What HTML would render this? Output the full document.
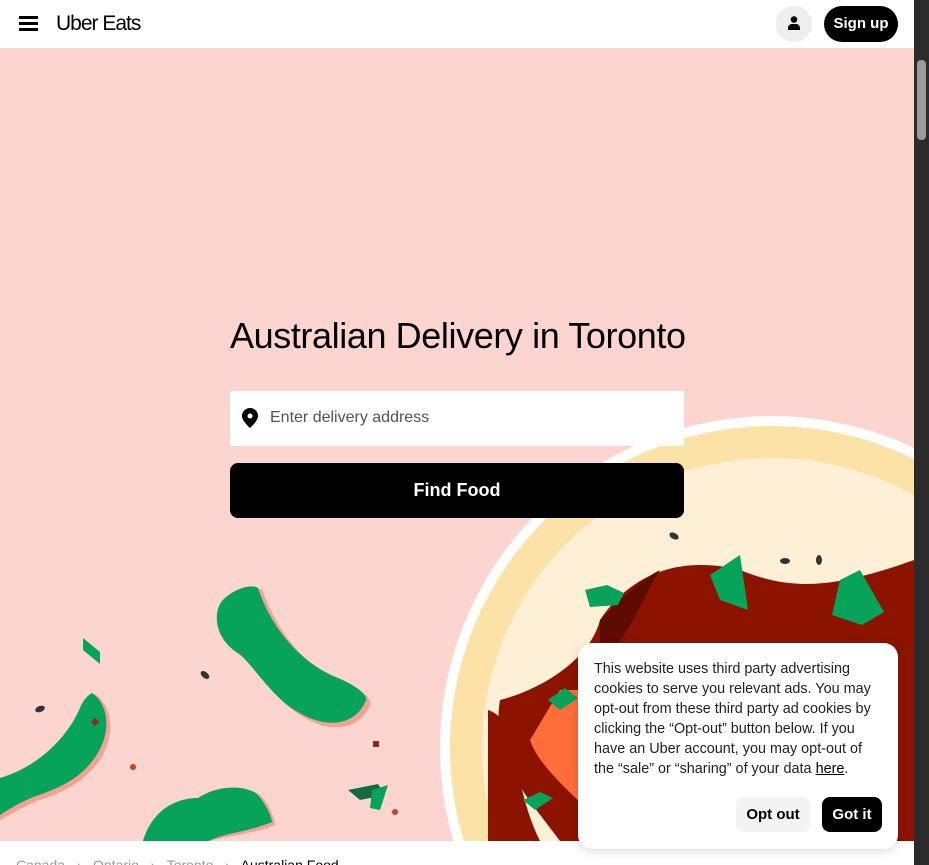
<!DOCTYPE html>
<html><head><meta charset="utf-8"><style>
*{margin:0;padding:0;box-sizing:border-box}
html,body{width:929px;height:865px;overflow:hidden}
body{background:#fff;font-family:"Liberation Sans",sans-serif;position:relative}
.hdr{position:absolute;left:0;top:0;width:914px;height:48px;background:#fff}
.hero{position:absolute;left:0;top:48px;width:914px;height:793px;background:#fdd5d0;overflow:hidden}
.sb{position:absolute;left:914px;top:0;width:15px;height:865px;background:#2b2b2b}
h1{position:absolute;left:230px;top:315px;font-size:36px;font-weight:400;color:#000;letter-spacing:-0.4px;white-space:nowrap}
.inp{position:absolute;left:230px;top:391px;width:454px;height:55px;background:#fff;font-size:16px;color:#545454}
.btn{position:absolute;left:230px;top:463px;width:454px;height:55px;background:#000;border-radius:8px;color:#fff;font-size:18px;font-weight:bold;text-align:center;line-height:55px}
.ck{position:absolute;left:578px;top:643px;width:320px;height:206px;background:#fff;border-radius:14px;box-shadow:0 2px 10px rgba(0,0,0,.15)}
.ck p{position:absolute;left:16px;top:16px;width:288px;font-size:14.4px;line-height:20px;color:#222}
.b{position:absolute;top:154px;height:35px;border-radius:8px;font-size:15px;font-weight:bold;text-align:center;line-height:35px}
.bc{position:absolute;top:857px;left:16px;font-size:14px;color:#999;white-space:nowrap;line-height:16px}
</style></head><body>
<div class="hdr">
<div style="position:absolute;left:19px;top:16px;width:19px;height:3px;background:#000"></div>
<div style="position:absolute;left:19px;top:22px;width:19px;height:3px;background:#000"></div>
<div style="position:absolute;left:19px;top:28px;width:19px;height:3px;background:#000"></div>
<div style="position:absolute;left:56px;top:12px;font-size:21px;letter-spacing:-1px;color:#000">Uber Eats</div>
<div style="position:absolute;left:776px;top:6px;width:36px;height:36px;border-radius:18px;background:#eee"></div>
<svg style="position:absolute;left:786px;top:15px" width="16" height="16" viewBox="0 0 16 16"><circle cx="8" cy="4.5" r="3.3" fill="#000"/><path d="M2 15v-2a4 4 0 0 1 4-4h4a4 4 0 0 1 4 4v2z" fill="#000"/></svg>
<div style="position:absolute;left:824px;top:6px;width:74px;height:36px;border-radius:18px;background:#000;color:#fff;font-weight:bold;font-size:15px;text-align:center;line-height:36px">Sign up</div>
</div>
<div class="hero">
<svg width="914" height="793" style="position:absolute;left:0;top:0">
<g transform="translate(0,-48)">
<circle cx="772" cy="748" r="332" fill="#fff"/>
<circle cx="772" cy="748" r="322" fill="#fde2a8"/>
<circle cx="772" cy="748" r="290" fill="#fef0d6"/>
<path d="M600 620 C640 560 700 560 740 570 C790 590 830 590 914 560 L914 841 L560 841 C530 800 490 760 500 700 C540 690 590 660 600 620Z" fill="#8b1300"/>
<path d="M600 620 C620 600 640 580 660 570 C640 600 630 640 600 660Z" fill="#5e0c00"/>
<path d="M560 690 L700 690 L700 841 L620 841 C580 800 540 770 530 740Z" fill="#ff6d3a"/>
<path d="M488 710 C520 720 510 780 540 841 L488 841Z" fill="#8b1300"/>
<path d="M585 590 L607 585 L624 593 L618 605 L590 607Z" fill="#07a35a"/>
<path d="M710 575 L740 555 L748 610 L720 600Z" fill="#07a35a"/>
<path d="M840 580 L860 570 L884 612 L862 625 L832 615Z" fill="#07a35a"/>
<path d="M548 700 L565 688 L578 698 L560 710Z" fill="#07a35a"/>
<path d="M523 800 L540 792 L553 798 L535 810Z" fill="#07a35a"/>
<path d="M228 600 C245 585 260 588 262 590 C275 625 300 665 340 680 C365 690 372 700 370 705 C360 730 330 735 300 715 C275 700 255 665 240 655 C215 640 215 610 228 600Z" fill="#f2a193"/>
<path d="M225 598 C240 585 255 585 258 588 C270 625 298 662 338 678 C362 688 368 698 366 700 C356 725 328 730 298 712 C272 698 252 663 238 653 C213 638 212 608 225 598Z" fill="#07a35a"/>
<path d="M0 782 C40 770 70 740 82 712 C86 700 92 696 95 694 C110 705 118 730 100 760 C85 780 70 790 40 800 C20 808 10 815 0 820Z" fill="#f2a193"/>
<path d="M0 778 C40 766 68 736 80 708 C84 698 90 694 92 693 C106 702 114 728 96 756 C82 776 66 786 36 796 C18 803 8 810 0 815Z" fill="#07a35a"/>
<path d="M145 841 C155 810 180 800 200 800 C215 790 240 785 260 795 C270 805 275 820 275 825 C250 835 230 835 210 841Z" fill="#f2a193"/>
<path d="M143 841 C153 808 178 798 198 798 C213 788 238 783 256 793 C266 803 272 818 272 822 C248 832 228 832 208 841Z" fill="#07a35a"/>
<path d="M83 638 L100 652 L100 664 L83 650Z" fill="#07a35a"/>
<path d="M348 790 L378 784 L385 795 L360 800Z" fill="#156c43"/>
<path d="M372 790 L388 785 L380 810 L370 808Z" fill="#07a35a"/>
<circle cx="133" cy="767" r="3" fill="#c0442a"/><circle cx="395" cy="812" r="3" fill="#c0442a"/>
<rect x="373" y="741" width="6" height="6" fill="#8e2d12"/>
<rect x="92" y="719" width="6" height="6" transform="rotate(45 95 722)" fill="#8e2d12"/>
<ellipse cx="205" cy="675" rx="5" ry="3" transform="rotate(40 205 675)" fill="#333"/>
<ellipse cx="40" cy="709" rx="5" ry="3" transform="rotate(-20 40 709)" fill="#333"/>
<ellipse cx="674" cy="536" rx="5" ry="3" transform="rotate(30 674 536)" fill="#333"/>
<ellipse cx="785" cy="561" rx="5" ry="3" fill="#333"/>
<ellipse cx="819" cy="560" rx="3" ry="5" fill="#333"/>
</g></svg>
</div>
<h1>Australian Delivery in Toronto</h1>
<div class="inp">
<svg style="position:absolute;left:12px;top:17px" width="16" height="20" viewBox="0 0 16 20"><path d="M8 0a8 8 0 0 0-8 8c0 5 8 12 8 12s8-7 8-12a8 8 0 0 0-8-8z" fill="#000"/><circle cx="8" cy="8" r="2.5" fill="#fff"/></svg>
<span style="position:absolute;left:40px;top:18px">Enter delivery address</span></div>
<div class="btn">Find Food</div>
<div class="ck"><p>This website uses third party advertising cookies to serve you relevant ads. You may opt-out from these third party ad cookies by clicking the “Opt-out” button below. If you have an Uber account, you may opt-out of the “sale” or “sharing” of your data <u style="color:#000">here</u>.</p>
<div class="b" style="left:158px;width:74px;background:#f3f3f3;color:#000">Opt out</div>
<div class="b" style="left:244px;width:60px;background:#000;color:#fff">Got it</div></div>
<div class="bc">Canada &nbsp;&nbsp;›&nbsp;&nbsp; Ontario &nbsp;&nbsp;›&nbsp;&nbsp; Toronto &nbsp;&nbsp;›&nbsp;&nbsp; <span style="color:#000">Australian Food</span></div>
<div class="sb"><div style="position:absolute;left:3px;top:60px;width:9px;height:80px;background:#9b9b9b;border-radius:4px"></div></div>
</body></html>
